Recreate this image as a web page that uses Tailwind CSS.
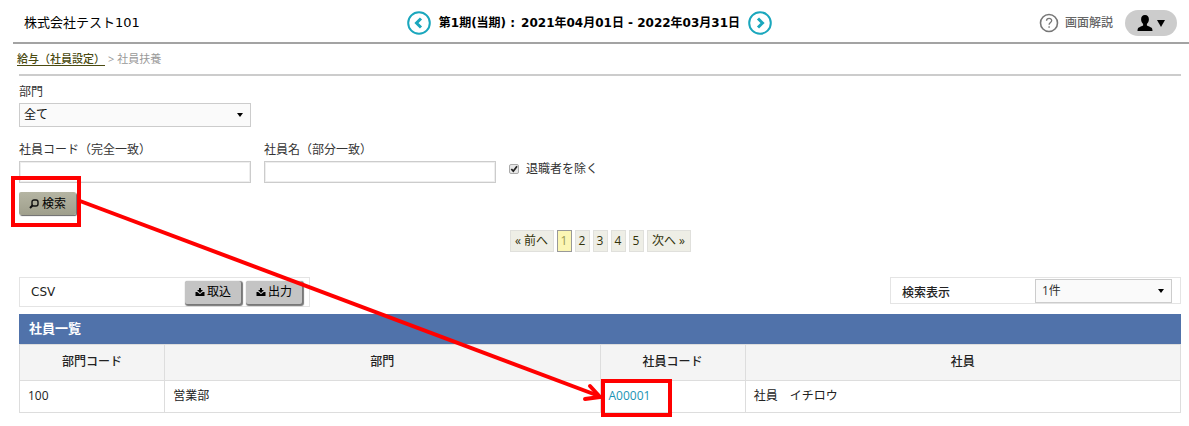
<!DOCTYPE html>
<html lang="ja">
<head>
  <meta charset="UTF-8" />
  <meta name="viewport" content="width=device-width, initial-scale=1" />
  <title>社員扶養 | 給与</title>
  <script src="https://cdn.jsdelivr.net/npm/@tailwindcss/browser@4"></script>
</head>
<body class="relative min-h-screen bg-white text-[12px] leading-4 text-[#333] font-['Open_Sans','Noto_Sans_CJK_JP',sans-serif]">

  <!-- header -->
  <header class="ml-[13px] h-11 pl-[11px] pr-3 pt-1 flex items-center justify-between border-b-2 border-[#a3a3a3] text-black">
    <div class="text-[13px] font-['DejaVu_Sans','Noto_Sans_CJK_JP',sans-serif]">株式会社テスト101</div>

    <div class="flex items-center gap-2">
      <button type="button" aria-label="前の期">
        <svg class="block size-6" viewBox="0 0 24 24" fill="none" stroke="#1aa7bd">
          <circle cx="12" cy="12" r="10.8" stroke-width="2" />
          <path d="M14 7.5 9.5 12l4.5 4.5" stroke-width="3" />
        </svg>
      </button>
      <p class="flex gap-[6px] font-bold whitespace-nowrap font-['DejaVu_Sans','Noto_Sans_CJK_JP',sans-serif]"><span>第1期(当期) :</span> <span>2021年04月01日 - 2022年03月31日</span></p>
      <button type="button" aria-label="次の期">
        <svg class="block size-6" viewBox="0 0 24 24" fill="none" stroke="#1aa7bd">
          <circle cx="12" cy="12" r="10.8" stroke-width="2" />
          <path d="m10 7.5 4.5 4.5-4.5 4.5" stroke-width="3" />
        </svg>
      </button>
    </div>

    <div class="flex items-center justify-end gap-3">
      <a href="#" class="flex items-center gap-[6px] text-[#666] font-medium">
        <svg class="size-5" viewBox="0 0 20 20" fill="none" stroke="#777">
          <circle cx="10" cy="10" r="8.5" stroke-width="1.6" />
          <path d="M7.5 7.8c.1-3.2 5.2-3.2 5.2-.2 0 1.9-2.6 2-2.6 4.2" stroke-width="1.3" />
          <circle cx="10.1" cy="14" r=".6" fill="#777" stroke-width=".5" />
        </svg>
        画面解説
      </a>
      <button type="button" aria-label="ユーザーメニュー" class="flex items-center justify-center gap-1 w-[52px] h-[26px] rounded-full bg-[#ccc]">
        <svg class="w-4 h-4" viewBox="0 0 16 16">
          <path d="M8 0c2.6 0 3.9 1.7 3.9 4.2 0 1.9-.8 3.7-2 4.7v1.5c1.2.9 3.5 1.3 4.7 2.3.6.5.8 1.5.9 3.3H.5c.1-1.8.3-2.8.9-3.3 1.2-1 3.5-1.4 4.7-2.3V8.9c-1.2-1-2-2.8-2-4.7C4.1 1.7 5.4 0 8 0z" />
        </svg>
        <svg class="w-2 h-[7px]" viewBox="0 0 8 7"><path d="M0 0h8L4 7z" /></svg>
      </button>
    </div>
  </header>

  <main class="ml-[19px] mr-2">
    <!-- breadcrumb -->
    <nav class="-ml-[2px] h-[30px] flex items-center gap-[3px] text-[11px] text-[#999]">
      <a href="#" class="underline underline-offset-2 font-medium text-[#4a4a10]">給与（社員設定）</a>
      <span>&gt;</span>
      <span>社員扶養</span>
    </nav>
    <div class="border-t-2 border-[#ccc]"></div>

    <!-- search form -->
    <form class="pt-2">
      <label for="dept" class="block">部門</label>
      <div class="mt-[3px] w-[232px] relative">
        <select id="dept" class="block w-full h-6 appearance-none border border-[#ccc] bg-[#fafafa] px-1 text-[#111]">
          <option>全て</option>
        </select>
        <svg class="absolute right-2 top-[10px] w-[6px] h-1 pointer-events-none" viewBox="0 0 6 4"><path d="M0 0h6L3 4z" /></svg>
      </div>

      <div class="mt-[15px] flex gap-[13px]">
        <div class="w-[232px]">
          <label for="code" class="block">社員コード（完全一致）</label>
          <input type="text" id="code" class="mt-[3px] block w-full h-[22px] border border-[#ccc] px-1 shadow-[inset_0_0_0_1px_#eee]" />
        </div>
        <div class="w-[232px]">
          <label for="name" class="block">社員名（部分一致）</label>
          <input type="text" id="name" class="mt-[3px] block w-full h-[22px] border border-[#ccc] px-1 shadow-[inset_0_0_0_1px_#eee]" />
        </div>
        <div class="flex items-center gap-[7px] pt-[18px] h-9">
          <span class="relative block size-[10px]">
            <input type="checkbox" id="retired" checked class="block size-[10px] appearance-none rounded-[2px] border border-[#aaa] bg-[#e8e8e8]" />
            <svg class="absolute inset-0 size-[10px] pointer-events-none" viewBox="0 0 10 10" fill="none" stroke="#222" stroke-width="1.8"><path d="m2.3 5 2 2.2L8 2.3" /></svg>
          </span>
          <label for="retired">退職者を除く</label>
        </div>
      </div>

      <button type="submit" class="mt-[9px] w-[57px] h-[23px] flex items-center justify-center gap-[3px] rounded-[2px] bg-linear-to-b from-[#b5b5a3] to-[#9f9f8c] text-black shadow-[1px_1px_1px_#666]">
        <svg class="size-[10px]" viewBox="0 0 10 10" fill="none" stroke="#111"><rect x="3" y="1" width="6" height="6" rx="2" stroke-width="1.4" /><path d="M3.7 6.3 1 9" stroke-width="2" /></svg>
        検索
      </button>
    </form>

    <!-- pagination -->
    <nav class="mt-[15px] flex justify-center gap-[3px] text-[#33330a]">
      <a href="#" class="w-11 h-[22px] border border-[#e0e0dc] bg-[#eeeee6] text-center leading-5 whitespace-nowrap">« 前へ</a>
      <a href="#" aria-current="page" class="w-[15px] h-[22px] border border-[#999] bg-[#fbf6b4] text-center leading-5 text-[#999955]">1</a>
      <a href="#" class="w-[15px] h-[22px] border border-[#e0e0dc] bg-[#eeeee6] text-center leading-5">2</a>
      <a href="#" class="w-[15px] h-[22px] border border-[#e0e0dc] bg-[#eeeee6] text-center leading-5">3</a>
      <a href="#" class="w-[15px] h-[22px] border border-[#e0e0dc] bg-[#eeeee6] text-center leading-5">4</a>
      <a href="#" class="w-[15px] h-[22px] border border-[#e0e0dc] bg-[#eeeee6] text-center leading-5">5</a>
      <a href="#" class="w-11 h-[22px] border border-[#e0e0dc] bg-[#eeeee6] text-center leading-5 whitespace-nowrap">次へ »</a>
    </nav>

    <!-- csv / display count -->
    <div class="mt-[25px] flex justify-between items-start">
      <div class="w-[291px] h-[30px] flex items-center border border-[#e4e4e4] pl-[11px] pr-[7px]">
        <span class="flex-1 text-[#222] font-['DejaVu_Sans',sans-serif]">CSV</span>
        <div class="flex gap-[5px] text-black">
          <button type="button" class="w-[56px] h-[23px] flex items-center justify-center gap-[2px] rounded-[2px] bg-[#c4c4c4] shadow-[1px_1px_1px_1px_#777]">
            <svg class="size-[10px]" viewBox="0 0 10 10"><path d="M4 1h2v2h2L5 6 2 3h2zM.5 5h1.700L5 7.300 7.800 5h1.700v4h-9z" /></svg>
            取込
          </button>
          <button type="button" class="w-[56px] h-[23px] flex items-center justify-center gap-[2px] rounded-[2px] bg-[#c4c4c4] shadow-[1px_1px_1px_1px_#777]">
            <svg class="size-[10px]" viewBox="0 0 10 10"><path d="M4 1h2v2h2L5 6 2 3h2zM.5 5h1.700L5 7.300 7.800 5h1.700v4h-9z" /></svg>
            出力
          </button>
        </div>
      </div>
      <div class="w-[291px] h-[27px] flex items-center border border-[#e4e4e4] pl-[11px] pr-2">
        <label for="count" class="flex-1 pt-1 font-medium text-[#222]">検索表示</label>
        <div class="relative w-[137px]">
          <select id="count" class="block w-full h-6 appearance-none border border-[#ccc] bg-[#fafafa] px-[6px]">
            <option>1件</option>
          </select>
          <svg class="absolute right-2 top-[10px] w-[6px] h-1 pointer-events-none" viewBox="0 0 6 4"><path d="M0 0h6L3 4z" /></svg>
        </div>
      </div>
    </div>

    <!-- employee list -->
    <h1 class="mt-[7px] h-[30px] px-[10px] bg-[#5072aa] text-white text-[13px] leading-7 font-bold">社員一覧</h1>
    <table class="w-full table-fixed border-collapse text-[#222]">
      <thead>
        <tr class="h-9 bg-[#f4f4f4]">
          <th class="w-[12.5%] border border-[#ddd] font-medium pb-[2px]">部門コード</th>
          <th class="w-[37.5%] border border-[#ddd] font-medium pb-[2px]">部門</th>
          <th class="w-[12.5%] border border-[#ddd] font-medium pb-[2px]">社員コード</th>
          <th class="w-[37.5%] border border-[#ddd] font-medium pb-[2px]">社員</th>
        </tr>
      </thead>
      <tbody>
        <tr class="h-8">
          <td class="border border-[#ddd] px-2 pb-[2px]">100</td>
          <td class="border border-[#ddd] px-2 pb-[2px]">営業部</td>
          <td class="border border-[#ddd] px-2 pb-[2px]"><a href="#" class="text-[#1a93b5]">A00001</a></td>
          <td class="border border-[#ddd] px-2 pb-[2px]">社員　イチロウ</td>
        </tr>
      </tbody>
    </table>
  </main>

  <!-- guide: search button to employee code -->
  <svg class="absolute left-0 top-0 w-[700px] h-[420px] pointer-events-none" viewBox="0 0 700 420" fill="none" stroke="#f00" stroke-width="4">
    <rect x="13" y="178" width="66" height="47" />
    <rect x="603" y="381" width="67" height="34" />
    <path d="M80 201 599 396" />
    <path d="M590 386 600 397 585 399" stroke-linecap="round" />
  </svg>

</body>
</html>
